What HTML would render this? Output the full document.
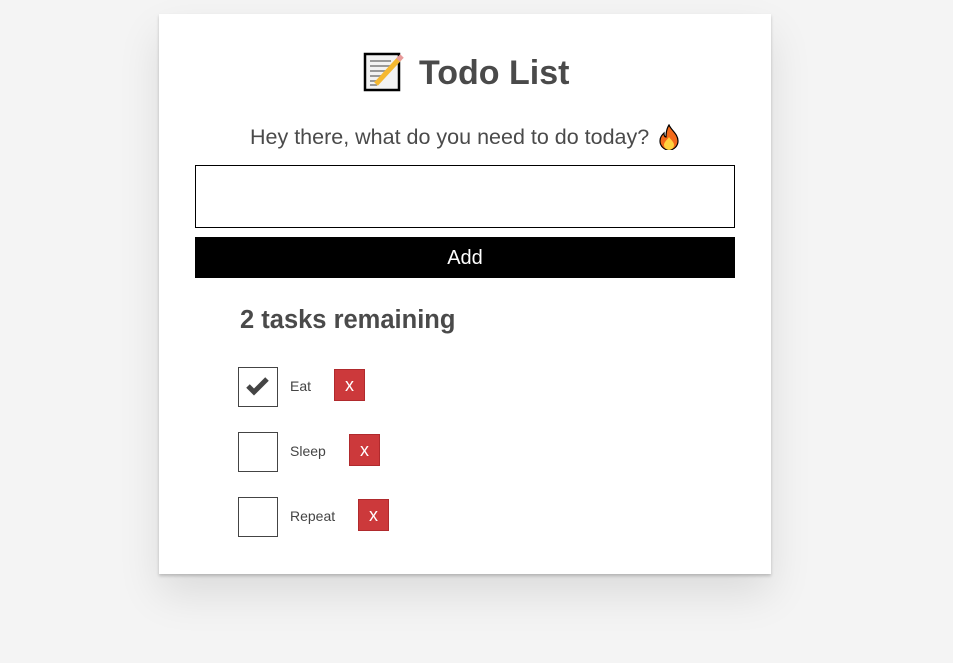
<!DOCTYPE html>
<html><head><meta charset="utf-8"><style>
*{margin:0;padding:0;box-sizing:border-box}
body{width:953px;height:663px;background:#f4f4f4;font-family:"Liberation Sans",Arial,sans-serif;color:#4a4a4a;position:relative;overflow:hidden}
.card{position:absolute;left:159px;top:14px;width:612px;height:560px;background:#fff;box-shadow:0 2px 3px rgba(0,0,0,.2),0 20px 40px rgba(0,0,0,.1)}
.a{position:absolute;white-space:nowrap}
.cb{position:absolute;left:79px;width:40px;height:40px;border:1px solid #444;background:#fff}
.x{position:absolute;width:31px;height:32px;background:#cc393b;border:1px solid #b02a2d;color:#fff;font-size:18px;text-align:center;line-height:30px}
.lbl{position:absolute;left:131px;font-size:14px;color:#444}
</style></head><body>
<div class="card">
<svg class="a" style="left:204px;top:38px" width="42" height="40" viewBox="0 0 42 40">
<rect x="2" y="2" width="34" height="36" fill="#f2f2f2" stroke="#000" stroke-width="2.5"/>
<g stroke="#999" stroke-width="2"><line x1="7" y1="9" x2="28" y2="9"/><line x1="7" y1="14" x2="30" y2="14"/><line x1="7" y1="19" x2="26" y2="19"/><line x1="7" y1="24" x2="22" y2="24"/><line x1="7" y1="29" x2="18" y2="29"/><line x1="7" y1="33" x2="14" y2="33"/></g>
<line x1="13" y1="32" x2="37" y2="6" stroke="#f5b830" stroke-width="5"/>
<line x1="35" y1="8" x2="39" y2="4" stroke="#e89a9a" stroke-width="5"/>
</svg>
<div class="a" style="left:260px;top:39px;font-size:34px;font-weight:bold;line-height:40px">Todo List</div>
<div class="a" style="left:91px;top:111px;font-size:21.5px;line-height:24px">Hey there, what do you need to do today?</div>
<svg class="a" style="left:499px;top:110px" width="22" height="26" viewBox="0 0 22 26">
<path d="M11 1C13 6 20 10 20 17a9 9 0 0 1-18 0c0-4 2-6 4-8 0 3 1 4 2 4C8 8 9 4 11 1z" fill="#f26a1b" stroke="#000" stroke-width="1.2"/>
<path d="M11 13c2 3 5 5 5 8a5 5 0 0 1-10 0c0-3 3-5 5-8z" fill="#ffd23e"/>
</svg>
<div class="a" style="left:36px;top:151px;width:540px;height:63px;border:1px solid #000"></div>
<div class="a" style="left:36px;top:223px;width:540px;height:41px;background:#000;color:#fff;font-size:20px;text-align:center;line-height:43px">Add</div>
<div class="a" style="left:81px;top:291px;font-size:25.5px;font-weight:bold;line-height:30px">2 tasks remaining</div>
<div class="cb" style="top:353px"><svg width="38" height="38" viewBox="0 0 38 38"><path d="M9 18l6 6 13-13" fill="none" stroke="#444" stroke-width="5"/></svg></div>
<div class="lbl" style="top:364px">Eat</div>
<div class="x" style="left:175px;top:355px">x</div>
<div class="cb" style="top:418px"></div>
<div class="lbl" style="top:429px">Sleep</div>
<div class="x" style="left:190px;top:420px">x</div>
<div class="cb" style="top:483px"></div>
<div class="lbl" style="top:494px">Repeat</div>
<div class="x" style="left:199px;top:485px">x</div>
</div>
</body></html>
